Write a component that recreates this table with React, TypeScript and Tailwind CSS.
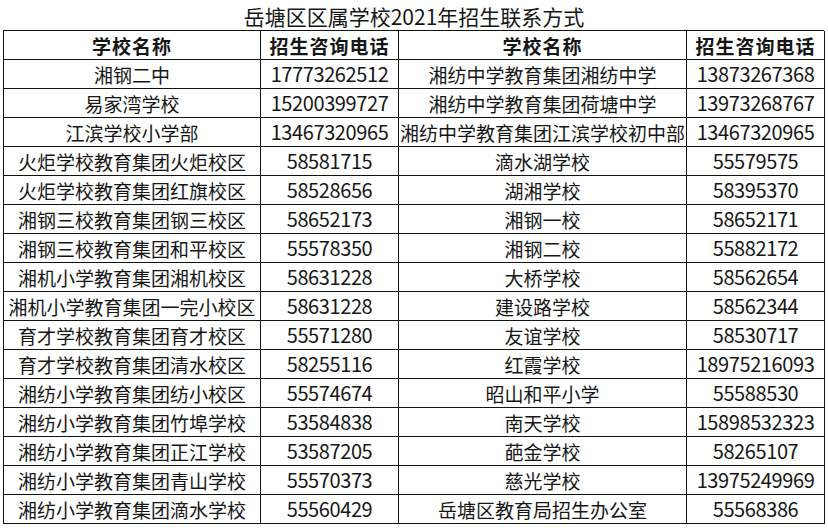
import * as React from "react";

/* ----------------------------- Data ----------------------------- */

type Row = [string, string, string, string];

const rows: Row[] = [
  ["湘钢二中", "17773262512", "湘纺中学教育集团湘纺中学", "13873267368"],
  ["易家湾学校", "15200399727", "湘纺中学教育集团荷塘中学", "13973268767"],
  ["江滨学校小学部", "13467320965", "湘纺中学教育集团江滨学校初中部", "13467320965"],
  ["火炬学校教育集团火炬校区", "58581715", "滴水湖学校", "55579575"],
  ["火炬学校教育集团红旗校区", "58528656", "湖湘学校", "58395370"],
  ["湘钢三校教育集团钢三校区", "58652173", "湘钢一校", "58652171"],
  ["湘钢三校教育集团和平校区", "55578350", "湘钢二校", "55882172"],
  ["湘机小学教育集团湘机校区", "58631228", "大桥学校", "58562654"],
  ["湘机小学教育集团一完小校区", "58631228", "建设路学校", "58562344"],
  ["育才学校教育集团育才校区", "55571280", "友谊学校", "58530717"],
  ["育才学校教育集团清水校区", "58255116", "红霞学校", "18975216093"],
  ["湘纺小学教育集团纺小校区", "55574674", "昭山和平小学", "55588530"],
  ["湘纺小学教育集团竹埠学校", "53584838", "南天学校", "15898532323"],
  ["湘纺小学教育集团正江学校", "53587205", "葩金学校", "58265107"],
  ["湘纺小学教育集团青山学校", "55570373", "慈光学校", "13975249969"],
  ["湘纺小学教育集团滴水学校", "55560429", "岳塘区教育局招生办公室", "55568386"],
];

const font = "[font-family:'Noto_Sans_CJK_SC','Noto_Sans',sans-serif]";

function Cell({ children, bold, num }: { children: React.ReactNode; bold?: boolean; num?: boolean }) {
  return (
    <div
      className={`flex h-[29px] items-center justify-center overflow-visible whitespace-nowrap border-b border-r border-[#111] leading-none ${
        bold ? "text-[19px] font-bold tracking-[1px]" : num ? "text-[20px] tracking-[-0.4px]" : "text-[19px]"
      }`}
    >
      {children}
    </div>
  );
}

/* ----------------------------- Page ----------------------------- */

export default function App() {
  return (
    <div className={`h-[528px] w-[828px] overflow-hidden bg-white text-[#161616] ${font}`}>
      <div className="flex h-[30px] items-center justify-center pt-[2px] text-[21px] leading-none">
        岳塘区区属学校2021年招生联系方式
      </div>
      <div className="pl-[3px]">
        <div className="grid w-[821px] grid-cols-[257px_138px_288px_138px] border-l border-t border-[#111]">
          <Cell bold>学校名称</Cell>
          <Cell bold>招生咨询电话</Cell>
          <Cell bold>学校名称</Cell>
          <Cell bold>招生咨询电话</Cell>
          {rows.map((r, i) => (
            <React.Fragment key={i}>
              <Cell>{r[0]}</Cell>
              <Cell num>{r[1]}</Cell>
              <Cell>{r[2]}</Cell>
              <Cell num>{r[3]}</Cell>
            </React.Fragment>
          ))}
        </div>
      </div>
    </div>
  );
}
